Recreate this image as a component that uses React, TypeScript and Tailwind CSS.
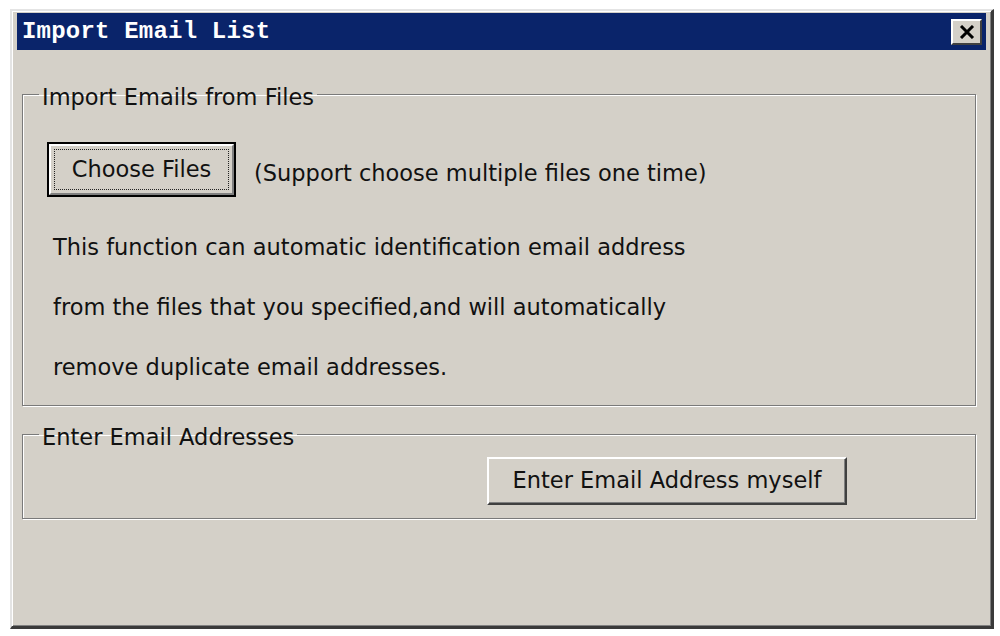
import React from 'react';

const ui = "font-['DejaVu_Sans',sans-serif] text-[22.5px] text-[#111]";

function RaisedButton({
  children,
  isDefault = false,
  className = '',
}: {
  children: React.ReactNode;
  isDefault?: boolean;
  className?: string;
}) {
  if (isDefault) {
    // default (focused) button: black frame, bevel, dotted focus rect
    return (
      <button className={`border-2 border-black bg-[#d4d0c8] ${className}`}>
        <div className="flex h-full w-full border-t-2 border-l-2 border-r-2 border-b-2 border-t-white border-l-white border-r-[#808080] border-b-[#808080] p-[3px]">
          <div className="flex flex-1 items-center justify-center border border-dotted border-[#222]">
            {children}
          </div>
        </div>
      </button>
    );
  }
  return (
    <button
      className={`flex items-center justify-center border-t-2 border-l-2 border-r-2 border-b-2 border-t-white border-l-white border-r-[#404040] border-b-[#404040] bg-[#d4d0c8] shadow-[inset_-1px_-1px_0_#808080] ${className}`}
    >
      {children}
    </button>
  );
}

function GroupBox({
  title,
  children,
  className = '',
}: {
  title: string;
  children: React.ReactNode;
  className?: string;
}) {
  return (
    <fieldset
      className={`border border-[#7a7a7a] shadow-[inset_1px_1px_0_#fff,1px_1px_0_#fff] ${className}`}
    >
      <legend className="ml-[16px] px-[3px] pt-[6px] leading-[28px]">{title}</legend>
      {children}
    </fieldset>
  );
}

export default function App() {
  return (
    <div className={`h-[636px] w-[1000px] bg-white pl-[10px] pt-[9px] ${ui}`}>
      {/* window frame */}
      <div className="flex h-[620px] w-[984px] flex-col border-t-2 border-l-2 border-r-[3px] border-b-[3px] border-t-[#e4e4e4] border-l-[#e4e4e4] border-r-[#3a3a3a] border-b-[#3a3a3a] bg-[#d4d0c8] px-[5px] pt-[2px] shadow-[inset_1px_1px_0_#fff,inset_-1px_-1px_0_#808080]">
        {/* title bar */}
        <div className="flex h-[37px] items-center justify-between bg-[#0a246a] pl-[5px] pr-[4px]">
          <span className="font-['Liberation_Mono',monospace] text-[24px] font-bold tracking-[0.2px] text-white">
            Import Email List
          </span>
          <button className="flex h-[26px] w-[31px] items-center justify-center border-t-2 border-l-2 border-r-2 border-b-2 border-t-white border-l-white border-r-[#404040] border-b-[#404040] bg-[#d4d0c8]">
            <svg width="16" height="14" viewBox="0 0 16 14">
              <path d="M2 1 L14 13 M14 1 L2 13" stroke="#000" strokeWidth="3" />
            </svg>
          </button>
        </div>

        {/* import from files */}
        <GroupBox title="Import Emails from Files" className="mt-[27px] ml-[5px] w-[954px]">
          <div className="pl-[24px] pt-[31px] pb-[8px]">
            <div className="flex items-center gap-[18px]">
              <RaisedButton isDefault className="h-[55px] w-[189px]">
                Choose Files
              </RaisedButton>
              <span className="mt-[8px]">(Support choose multiple files one time)</span>
            </div>
            <div className="mt-[20px] ml-[6px] leading-[60px]">
              <p>This function can automatic identification email address</p>
              <p>from the files that you specified,and will automatically</p>
              <p>remove duplicate email addresses.</p>
            </div>
          </div>
        </GroupBox>

        {/* manual entry */}
        <GroupBox title="Enter Email Addresses" className="mt-[11px] ml-[5px] w-[954px]">
          <div className="pl-[464px] pt-[6px] pb-[13px]">
            <RaisedButton className="h-[48px] w-[360px]">Enter Email Address myself</RaisedButton>
          </div>
        </GroupBox>
      </div>
    </div>
  );
}
